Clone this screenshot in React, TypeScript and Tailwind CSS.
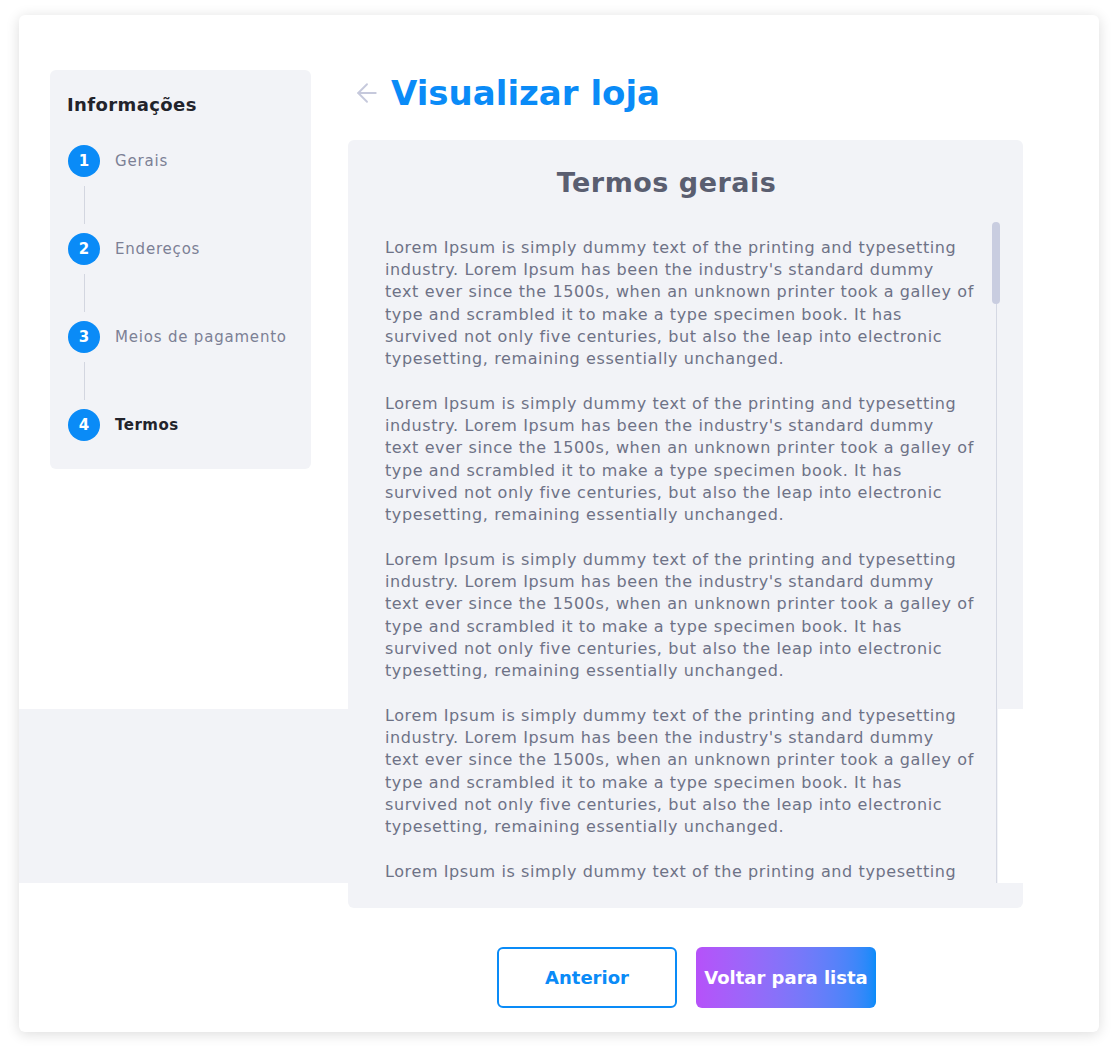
import { ArrowLeft } from "lucide-react";

const LOREM = [
  "Lorem Ipsum is simply dummy text of the printing and typesetting",
  "industry. Lorem Ipsum has been the industry's standard dummy",
  "text ever since the 1500s, when an unknown printer took a galley of",
  "type and scrambled it to make a type specimen book. It has",
  "survived not only five centuries, but also the leap into electronic",
  "typesetting, remaining essentially unchanged.",
];

const steps = [
  { n: 1, label: "Gerais" },
  { n: 2, label: "Endereços" },
  { n: 3, label: "Meios de pagamento" },
  { n: 4, label: "Termos", active: true },
];

function Sidebar() {
  return (
    <aside className="w-[261px] h-[399px] shrink-0 rounded-md bg-[#f2f3f7] pl-[17px] pt-[24px]">
      <h3 className="text-[18px] leading-[22px] font-bold tracking-[0.4px] text-[#22232b]">Informações</h3>
      <ol className="mt-[29px] pl-px">
        {steps.map((s, i) => (
          <li key={s.n}>
            <div className="flex items-center gap-[15px]">
              <span className="flex h-[32px] w-[32px] items-center justify-center rounded-full bg-[#0a8bf7] text-[15px] font-bold text-white">
                {s.n}
              </span>
              <span
                className={
                  s.active
                    ? "text-[15px] font-bold tracking-[0.5px] text-[#22232b]"
                    : "text-[15px] tracking-[0.8px] text-[#7c8095]"
                }
              >
                {s.label}
              </span>
            </div>
            {i < steps.length - 1 && (
              <div className="flex h-[56px] w-[32px] justify-center py-[9px]">
                <div className="w-px bg-[#d3d6e0]" />
              </div>
            )}
          </li>
        ))}
      </ol>
    </aside>
  );
}

function Terms() {
  return (
    <section className="relative mt-[24px] h-[768px] rounded-md bg-[#f2f3f7] pt-[27px]">
      <h2 className="pr-[38px] text-center text-[27px] leading-[32px] font-bold tracking-[0.5px] text-[#5a5e70]">
        Termos gerais
      </h2>
      <div className="mt-[23px] flex h-[661px] pl-[37px] pr-[23px]">
        <div className="flex-1 overflow-hidden pt-[15px] text-[16px] leading-[22.2px] tracking-[0.6px] text-[#6e7286]">
          {[0, 1, 2, 3, 4].map((p) => (
            <p key={p} className="mb-[22.8px] whitespace-nowrap">
              {LOREM.map((l, i) => (
                <span key={i} className="block">
                  {l}
                </span>
              ))}
            </p>
          ))}
        </div>
        <div className="relative w-[8px] shrink-0">
          <div className="absolute left-[4px] top-0 h-full w-px bg-[#d5d8e3]" />
          <div className="relative h-[82px] w-[8px] rounded-full bg-[#c9cde0]" />
        </div>
      </div>
      <div className="absolute right-0 top-[569px] h-[174px] w-[25px] bg-white" />
    </section>
  );
}

export default function App() {
  return (
    <div
      className="min-h-screen bg-white pl-[19px] pt-[15px]"
      style={{ fontFamily: "'DejaVu Sans', Inter, sans-serif" }}
    >
      <div className="relative h-[1017px] w-[1080px] rounded-md bg-white pl-[31px] pt-[55px] shadow-[0_2px_14px_rgba(0,0,0,0.14)]">
        <div className="absolute left-0 top-[694px] h-[174px] w-[329px] bg-[#f2f3f7]" />
        <div className="relative flex gap-[37px]">
          <Sidebar />
          <main className="flex w-[675px] flex-col">
            <div className="flex h-[46px] items-center gap-[9px] pl-[4px]">
              <ArrowLeft className="h-[30px] w-[30px] text-[#c6c9dc]" strokeWidth={1.5} />
              <h1 className="text-[34px] leading-[40px] font-bold text-[#0a8bf7]">Visualizar loja</h1>
            </div>
            <Terms />
            <div className="mt-[39px] flex justify-center gap-[19px] pl-[2px]">
              <button className="h-[61px] w-[180px] rounded-md border-2 border-[#0a8bf7] bg-white text-[18px] font-bold text-[#0a8bf7]">
                Anterior
              </button>
              <button className="h-[61px] w-[180px] rounded-md bg-gradient-to-r from-[#b651f9] to-[#078bf9] text-[18px] font-bold text-white">
                Voltar para lista
              </button>
            </div>
          </main>
        </div>
      </div>
    </div>
  );
}
